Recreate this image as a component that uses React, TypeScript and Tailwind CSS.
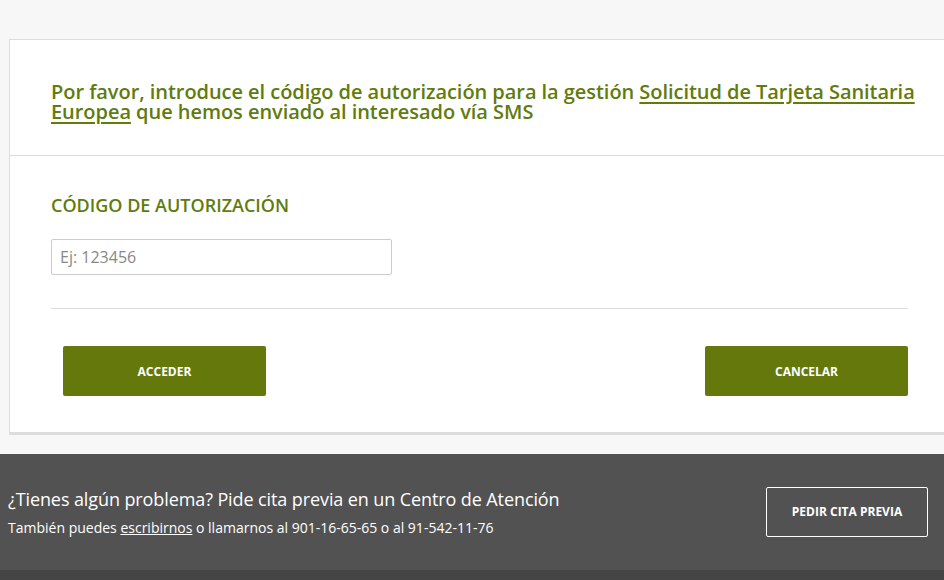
import React from 'react';

const App: React.FC = () => {
    return (
        <div className="min-h-[580px] bg-[#f7f7f7] overflow-hidden font-['Open_Sans',sans-serif]">
            <div className="pt-[39px] pl-[9px]">
                {/* Tarjeta principal */}
                <div className="w-[948px] bg-white border-t border-l border-r border-[#dddddd] border-b-[3px]">
                    <div className="pt-[42px] pb-[33px] pl-[41px] pr-[20px] border-b border-[#dddddd]">
                        <p className="text-[20px] leading-[20px] font-semibold tracking-[-0.05px] text-[#617b0d]">
                            Por favor, introduce el código de autorización para la gestión{' '}
                            <a href="#" className="underline decoration-[2px] underline-offset-[3px]">Solicitud de Tarjeta Sanitaria Europea</a>{' '}
                            que hemos enviado al interesado vía SMS
                        </p>
                    </div>

                    <div className="pt-[37px] pb-[36px] pl-[41px] pr-[48px]">
                        <h3 className="text-[18px] leading-[24px] font-semibold text-[#617b0d]">CÓDIGO DE AUTORIZACIÓN</h3>
                        <input
                            type="text"
                            placeholder="Ej: 123456"
                            className="mt-[22px] block w-[341px] h-[36px] px-[8px] border border-[#cccccc] rounded-[2px] text-[16px] text-[#333] placeholder:text-[#888888] outline-none"
                        />
                        <div className="mt-[33px] border-t border-[#dddddd]" />
                        <div className="mt-[37px] flex justify-between pl-[12px]">
                            <button className="w-[203px] h-[50px] pt-[2px] bg-[#65780c] rounded-[2px] text-white text-[12px] font-bold">ACCEDER</button>
                            <button className="w-[203px] h-[50px] pt-[2px] bg-[#65780c] rounded-[2px] text-white text-[12px] font-bold">CANCELAR</button>
                        </div>
                    </div>
                </div>
            </div>

            {/* Pie de ayuda */}
            <div className="mt-[19px] bg-[#525252] h-[116px] pl-[8px] pr-[16px] flex items-center justify-between">
                <div className="flex flex-col gap-[6px] text-white">
                    <p className="text-[18px] leading-[26px] tracking-[-0.1px]">¿Tienes algún problema? Pide cita previa en un Centro de Atención</p>
                    <p className="text-[14px] leading-[20px]">
                        También puedes <a href="#" className="underline">escribirnos</a> o llamarnos al 901-16-65-65 o al 91-542-11-76
                    </p>
                </div>
                <button className="w-[162px] h-[50px] border border-white rounded-[2px] text-white text-[12px] font-bold">PEDIR CITA PREVIA</button>
            </div>
            <div className="h-[10px] bg-[#454545]" />
        </div>
    );
};

export default App;
